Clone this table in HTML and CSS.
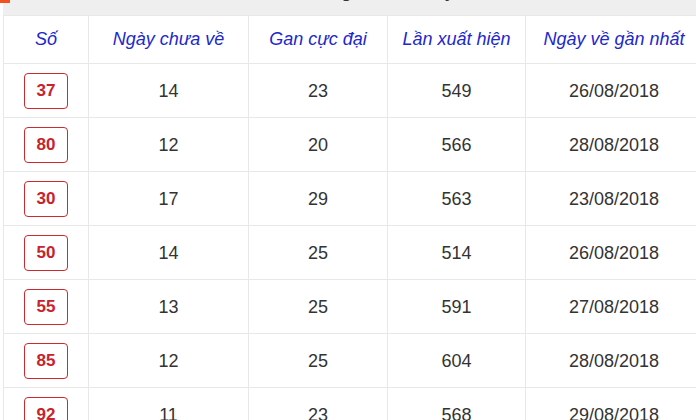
FILE: index.html
```html
<!DOCTYPE html>
<html lang="vi">
<head>
<meta charset="utf-8">
<title>Lô gan</title>
<link rel="stylesheet" href="styles.css">
</head>
<body>
<div class="page">
  <div class="topbar"><span class="caption">Lô gan hôm nay</span></div>
  <table class="gan">
    <colgroup>
      <col class="c1"><col class="c2"><col class="c3"><col class="c4"><col class="c5">
    </colgroup>
    <thead>
      <tr><th>Số</th><th>Ngày chưa về</th><th>Gan cực đại</th><th>Lần xuất hiện</th><th>Ngày về gần nhất</th></tr>
    </thead>
    <tbody>
      <tr><td><span class="num">37</span></td><td>14</td><td>23</td><td>549</td><td>26/08/2018</td></tr>
      <tr><td><span class="num">80</span></td><td>12</td><td>20</td><td>566</td><td>28/08/2018</td></tr>
      <tr><td><span class="num">30</span></td><td>17</td><td>29</td><td>563</td><td>23/08/2018</td></tr>
      <tr><td><span class="num">50</span></td><td>14</td><td>25</td><td>514</td><td>26/08/2018</td></tr>
      <tr><td><span class="num">55</span></td><td>13</td><td>25</td><td>591</td><td>27/08/2018</td></tr>
      <tr><td><span class="num">85</span></td><td>12</td><td>25</td><td>604</td><td>28/08/2018</td></tr>
      <tr><td><span class="num">92</span></td><td>11</td><td>23</td><td>568</td><td>29/08/2018</td></tr>
    </tbody>
  </table>
</div>
</body>
</html>
```

FILE: styles.css
```css
html, body {
  margin: 0;
  padding: 0;
  background: #ffffff;
  overflow: hidden;
}
body {
  font-family: "Liberation Sans", Arial, sans-serif;
  width: 696px;
  height: 420px;
}
.page {
  position: relative;
  padding-left: 3px;
}
.page::before {
  content: "";
  position: absolute;
  left: 0;
  top: 0;
  width: 10px;
  height: 3px;
  background: #f4511e;
}
.topbar {
  height: 15px;
  background: #efefef;
  overflow: hidden;
  text-align: center;
  width: 700px;
}
.caption {
  display: block;
  padding-left: 60px;
  word-spacing: 4px;
  font-size: 17px;
  font-weight: bold;
  color: #333;
  line-height: 17px;
  margin-top: -16px;
  white-space: nowrap;
}
.gan {
  border-collapse: collapse;
  width: 700px;
  table-layout: fixed;
}
.c1 { width: 85px; }
.c2 { width: 160px; }
.c3 { width: 139px; }
.c4 { width: 138px; }
.gan th, .gan td {
  border: 1px solid #e8e8e8;
  text-align: center;
  padding: 0;
}
.gan th {
  height: 47px;
  font-size: 18px;
  font-style: italic;
  font-weight: normal;
  color: #2027cf;
}
.gan td {
  height: 52px;
  padding-top: 1px;
  font-size: 18px;
  color: #333333;
}
.num {
  display: inline-flex;
  align-items: center;
  justify-content: center;
  width: 42px;
  height: 34px;
  border: 1.5px solid #cc2a30;
  border-radius: 4px;
  color: #c8222b;
  font-weight: bold;
  font-size: 17px;
  vertical-align: middle;
}
```
